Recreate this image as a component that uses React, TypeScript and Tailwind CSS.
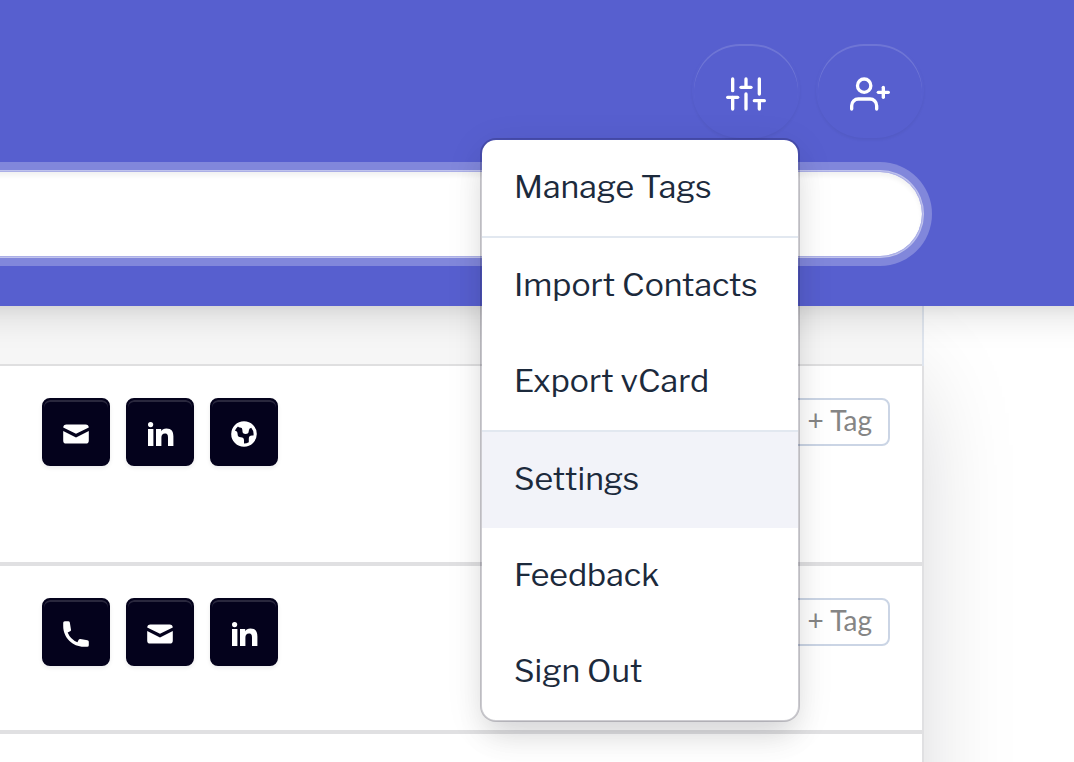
import type { ReactNode } from "react";
import { FiSliders, FiUserPlus } from "react-icons/fi";
import { HiGlobe, HiMail, HiPhone } from "react-icons/hi";

type Channel = "phone" | "mail" | "linkedin" | "web";

const contacts: { id: number; channels: Channel[]; rowClass: string }[] = [
  { id: 1, channels: ["mail", "linkedin", "web"], rowClass: "h-50" },
  { id: 2, channels: ["phone", "mail", "linkedin"], rowClass: "h-42" },
];

const menuGroups = [
  ["Manage Tags"],
  ["Import Contacts", "Export vCard"],
  ["Settings", "Feedback", "Sign Out"],
];

function LinkedInIcon() {
  return (
    <svg viewBox="0 0 28 24" className="h-6 w-7" fill="currentColor" aria-hidden="true">
      <circle cx="4.6" cy="2.6" r="2.6" />
      <path d="M2 7h5.400v17H2zM10 7h5.200v2.300c.9-1.600 2.700-2.700 5.200-2.700 5.200 0 7 3 7 7.900V24H22v-8.300c0-2.500-.4-4.300-3-4.300-2.700 0-3.600 1.900-3.600 4.300V24H10z" />
    </svg>
  );
}

const channelIcons: Record<Channel, { label: string; icon: ReactNode }> = {
  phone: { label: "Call", icon: <HiPhone className="size-8" /> },
  mail: { label: "Email", icon: <HiMail className="size-8" /> },
  linkedin: { label: "LinkedIn", icon: <LinkedInIcon /> },
  web: { label: "Website", icon: <HiGlobe className="size-8" /> },
};

function HeaderButton({ label, children }: { label: string; children: ReactNode }) {
  return (
    <button
      type="button"
      aria-label={label}
      className="flex h-24 w-27 items-center justify-center rounded-[48px] border-2 border-transparent pt-2 text-white shadow-[inset_0_2px_0_rgba(255,255,255,0.14),0_2px_3px_rgba(0,0,0,0.05)]"
    >
      {children}
    </button>
  );
}

function OptionsMenu() {
  return (
    <div
      role="menu"
      className="absolute top-full right-0 w-80 overflow-hidden rounded-2xl border-2 border-[#050218]/20 bg-white bg-clip-padding shadow-[0_20px_30px_-6px_rgba(5,2,24,0.1),0_8px_40px_-4px_rgba(5,2,24,0.1)]"
    >
      {menuGroups.map((group, i) => (
        <div key={i} className="border-slate-200 not-first:border-t-2">
          {group.map((item) => (
            <button
              key={item}
              type="button"
              role="menuitem"
              className={`block w-full px-8 pt-[23px] pb-[25px] text-left text-[32px] leading-12 text-[#1c2a3c] ${
                item === "Settings" ? "bg-[#f2f3f9]" : ""
              }`}
            >
              {item}
            </button>
          ))}
        </div>
      ))}
    </div>
  );
}

export default function App() {
  return (
    <div className="flex h-screen flex-col overflow-hidden bg-white font-['Libre_Franklin',Roboto,sans-serif]">
      {/* bleeds past both sides so the shadow stays even to the window edge */}
      <header className="relative z-10 -mx-16 bg-[#575fcf] pt-[42px] pr-[214px] pb-12 shadow-[0_20px_30px_-6px_rgba(0,0,0,0.1),0_8px_12px_-4px_rgba(0,0,0,0.05)]">
        <div className="relative z-10 flex justify-end gap-4">
          <div className="relative">
            <HeaderButton label="Options">
              <FiSliders className="size-10" />
            </HeaderButton>
            <OptionsMenu />
          </div>
          <HeaderButton label="Add contact">
            <FiUserPlus className="size-10" />
          </HeaderButton>
        </div>
        <input
          type="search"
          aria-label="Search contacts"
          className="mt-8 block h-22 w-full rounded-r-full border-2 border-white/50 bg-white bg-clip-padding px-24 text-[32px] shadow-[0_0_0_8px_rgba(255,255,255,0.25),inset_0_4px_4px_rgba(0,0,0,0.05)] outline-none"
        />
      </header>

      <main className="mr-[150px] flex-1 shrink-0 bg-white shadow-[0_60px_100px_-20px_rgba(5,2,24,0.22)]">
        <div className="border-r-2 border-[#dfe5ee]">
          <div className="h-15 border-b-2 border-[#dfdfe0] bg-[#f6f6f6]" />
        </div>
        <div className="border-r-2 border-[#e0e0e2]">
          {contacts.map((contact) => (
            <div
              key={contact.id}
              className={`flex items-start justify-between border-b-4 border-[#e0e0e2] py-8 pr-8 pl-[42px] ${contact.rowClass}`}
            >
              <div className="flex gap-4">
                {contact.channels.map((channel) => (
                  <button
                    key={channel}
                    type="button"
                    aria-label={channelIcons[channel].label}
                    className="flex size-17 items-center justify-center rounded-lg border-2 border-[#04021c] bg-[#04021c] pt-1 text-white shadow-[inset_0_2px_0_rgba(255,255,255,0.15),0_2px_4px_rgba(5,2,24,0.08)]"
                  >
                    {channelIcons[channel].icon}
                  </button>
                ))}
              </div>
              <button
                type="button"
                className="h-12 rounded-lg border-2 border-[#cbd5e5] px-4 pb-1 font-[Lato,sans-serif] text-[28px] leading-10 text-[#858585]"
              >
                + Tag
              </button>
            </div>
          ))}
          <div className="h-50" />
        </div>
      </main>
    </div>
  );
}
